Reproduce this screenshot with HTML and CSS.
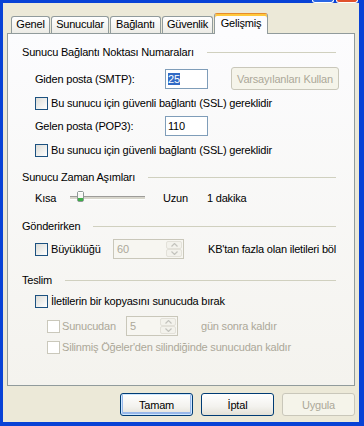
FILE: index.html
```html
<!DOCTYPE html>
<html lang="tr">
<head>
    <meta charset="UTF-8">
    <meta name="viewport" content="width=device-width, initial-scale=1.0">
    <title>Gelişmiş</title>
    <link rel="stylesheet" href="styles.css">
</head>
<body>
    <div class="window">
        <div class="titlebar">
            <span class="tb-btn tb-help"></span>
            <span class="tb-btn tb-close"></span>
        </div>

        <div class="dialog">
            <div class="tabs">
                <div class="tab tab-genel">Genel</div>
                <div class="tab tab-servers">Sunucular</div>
                <div class="tab tab-conn">Bağlantı</div>
                <div class="tab tab-sec">Güvenlik</div>
                <div class="tab tab-active">Gelişmiş</div>
            </div>

            <div class="panel">
                <div class="group-title">
                    <span>Sunucu Bağlantı Noktası Numaraları</span>
                    <span class="rule"></span>
                </div>

                <div class="row row-smtp">
                    <span class="field-label">Giden posta (SMTP):</span>
                    <span class="edit"><span class="sel">25</span></span>
                    <span class="btn btn-disabled btn-defaults">Varsayılanları Kullan</span>
                </div>

                <div class="row check-row c1">
                    <span class="box"></span>
                    <span>Bu sunucu için güvenli bağlantı (SSL) gereklidir</span>
                </div>

                <div class="row row-pop3">
                    <span class="field-label">Gelen posta (POP3):</span>
                    <span class="edit">110</span>
                </div>

                <div class="row check-row c2">
                    <span class="box"></span>
                    <span>Bu sunucu için güvenli bağlantı (SSL) gereklidir</span>
                </div>

                <div class="group-title h2">
                    <span>Sunucu Zaman Aşımları</span>
                    <span class="rule"></span>
                </div>

                <div class="row row-slider">
                    <span class="slider-label">Kısa</span>
                    <span class="track">
                        <svg class="thumb" width="7" height="11" viewBox="0 0 7 11">
                            <rect x="0.5" y="0.5" width="6" height="10" rx="1.5" fill="#f7f7f4" stroke="#8e9896"/>
                            <rect x="1" y="7" width="5" height="3" fill="#3fae48"/>
                            <rect x="1" y="1" width="5" height="1" fill="#ffffff"/>
                        </svg>
                    </span>
                    <span class="slider-long">Uzun</span>
                    <span>1 dakika</span>
                </div>

                <div class="group-title h3">
                    <span>Gönderirken</span>
                    <span class="rule"></span>
                </div>

                <div class="row row-size">
                    <span class="box"></span>
                    <span class="size-label">Büyüklüğü</span>
                    <span class="spin spin-size">
                        <span class="spin-value">60</span>
                        <span class="spin-btns">
                            <span class="spin-btn"><svg width="7" height="4" viewBox="0 0 7 4"><polyline points="0.5,3.5 3.5,0.5 6.5,3.5" fill="none" stroke="#c3c3bd" stroke-width="1.2"/></svg></span>
                            <span class="spin-btn"><svg width="7" height="4" viewBox="0 0 7 4"><polyline points="0.5,0.5 3.5,3.5 6.5,0.5" fill="none" stroke="#c3c3bd" stroke-width="1.2"/></svg></span>
                        </span>
                    </span>
                    <span class="size-tail">KB'tan fazla olan iletileri böl</span>
                </div>

                <div class="group-title h4">
                    <span>Teslim</span>
                    <span class="rule"></span>
                </div>

                <div class="row check-row c3">
                    <span class="box"></span>
                    <span>İletilerin bir kopyasını sunucuda bırak</span>
                </div>

                <div class="row row-days disabled">
                    <span class="box"></span>
                    <span class="days-label">Sunucudan</span>
                    <span class="spin spin-days">
                        <span class="spin-value">5</span>
                        <span class="spin-btns">
                            <span class="spin-btn"><svg width="7" height="4" viewBox="0 0 7 4"><polyline points="0.5,3.5 3.5,0.5 6.5,3.5" fill="none" stroke="#c3c3bd" stroke-width="1.2"/></svg></span>
                            <span class="spin-btn"><svg width="7" height="4" viewBox="0 0 7 4"><polyline points="0.5,0.5 3.5,3.5 6.5,0.5" fill="none" stroke="#c3c3bd" stroke-width="1.2"/></svg></span>
                        </span>
                    </span>
                    <span class="days-tail">gün sonra kaldır</span>
                </div>

                <div class="row check-row c4 disabled">
                    <span class="box"></span>
                    <span>Silinmiş Öğeler'den silindiğinde sunucudan kaldır</span>
                </div>
            </div>

            <div class="actions">
                <span class="btn btn-default">Tamam</span>
                <span class="btn">İptal</span>
                <span class="btn btn-disabled">Uygula</span>
            </div>
        </div>
    </div>
</body>
</html>
```

FILE: styles.css
```css
body {
    margin: 0;
    font-family: "Liberation Sans", Arial, sans-serif;
    font-size: 11px;
    letter-spacing: -0.2px;
    color: #000;
}

.window {
    width: 364px;
    height: 426px;
    box-sizing: border-box;
    background: #0842d6;
    padding: 0 5px 4px 3px;
    display: flex;
    flex-direction: column;
}

.titlebar {
    height: 3px;
    display: flex;
    justify-content: flex-end;
    gap: 2px;
    padding-right: 1px;
}

.tb-btn {
    width: 20px;
    height: 2px;
    border: 1px solid #fff;
    border-top: none;
    border-radius: 0 0 3px 3px;
}

.tb-help {
    background: #2a66e4;
}

.tb-close {
    background: #e0512c;
}

.dialog {
    flex: 1;
    background: #ece9d8;
    display: flex;
    flex-direction: column;
    padding: 10px 4px 0 4px;
}

/* tabs */

.tabs {
    display: flex;
    align-items: flex-end;
    gap: 1px;
    height: 21px;
    padding-left: 4px;
    margin-bottom: -1px;
    position: relative;
    z-index: 1;
}

.tab {
    box-sizing: border-box;
    height: 17px;
    margin-bottom: 1px;
    border: 1px solid #919b9c;
    border-bottom: none;
    border-radius: 3px 3px 0 0;
    background: linear-gradient(#ffffff, #ecebe6);
    text-align: center;
    line-height: 15px;
}

.tab-genel { width: 39px; }
.tab-servers { width: 58px; }
.tab-conn { width: 51px; }
.tab-sec { width: 51px; }

.tab-active {
    width: 54px;
    height: 21px;
    margin-bottom: 0;
    border-top: 1px solid #e68b2c;
    background: #fcfcfe;
    box-shadow: inset 0 2px 0 #ffc83c;
    padding-top: 2px;
}

/* panel */

.panel {
    height: 353px;
    box-sizing: border-box;
    border: 1px solid #919b9c;
    background: linear-gradient(#fcfcfe, #f4f3ee);
    padding: 10px 0 0 14px;
}

.group-title {
    display: flex;
    align-items: center;
    height: 16px;
}

.rule {
    flex: 1;
    border-top: 1px solid #d0d0bf;
    margin: 0 18px 0 13px;
}

.h2 { margin-top: 11px; }
.h3 { margin-top: 10px; }
.h4 { margin-top: 13px; }

.row {
    display: flex;
    align-items: center;
    margin-left: 13px;
}

.check-row { height: 16px; }

.row-smtp { height: 23px; margin-top: 7px; }
.c1 { margin-top: 5px; }
.row-pop3 { height: 20px; margin-top: 5px; }
.c2 { margin-top: 6px; }
.row-slider { height: 20px; margin-top: 3px; }
.row-size { height: 20px; margin-top: 5px; }
.c3 { margin-top: 5px; }
.row-days { height: 20px; margin-top: 7px; margin-left: 25px; }
.c4 { margin-top: 3px; margin-left: 25px; }

.field-label {
    width: 130px;
}

.edit {
    box-sizing: border-box;
    width: 43px;
    height: 20px;
    border: 1px solid #7f9db9;
    background: #fff;
    padding-left: 2px;
    display: flex;
    align-items: center;
}

.sel {
    background: #316ac5;
    color: #fff;
}

.box {
    box-sizing: border-box;
    width: 13px;
    height: 13px;
    border: 1px solid #1c5180;
    background: linear-gradient(135deg, #dcdcd7, #ffffff);
    margin-right: 3px;
    flex-shrink: 0;
}

.disabled {
    color: #aca899;
}

.disabled .box {
    border-color: #cac8bb;
    background: #fff;
    margin-right: 2px;
}

/* slider */

.slider-label {
    width: 35px;
}

.track {
    position: relative;
    width: 75px;
    height: 2px;
    border-top: 1px solid #9d9c99;
    border-bottom: 1px solid #fff;
    background: #d8d6cc;
}

.thumb {
    position: absolute;
    left: 7px;
    top: -6px;
}

.slider-long {
    width: 44px;
    margin-left: 18px;
}

/* spinners */

.size-label { width: 62px; }
.days-label { width: 64px; }

.spin {
    box-sizing: border-box;
    height: 20px;
    border: 1px solid #c9c7ba;
    background: #f7f6f1;
    display: flex;
    color: #aca899;
}

.spin-size { width: 71px; }
.spin-days { width: 52px; }

.spin-value {
    flex: 1;
    padding-left: 3px;
    display: flex;
    align-items: center;
}

.spin-btns {
    width: 16px;
    display: flex;
    flex-direction: column;
    padding: 1px;
    gap: 0;
}

.spin-btn {
    flex: 1;
    border: 1px solid #e3e1d9;
    border-radius: 2px;
    background: #f3f2ec;
    display: flex;
    align-items: center;
    justify-content: center;
}

.size-tail { margin-left: 24px; }
.days-tail { margin-left: 23px; }

/* buttons */

.btn {
    box-sizing: border-box;
    width: 73px;
    height: 23px;
    border: 1px solid #003c74;
    border-radius: 3px;
    background: linear-gradient(#ffffff, #f3f2ee 60%, #e3e1d7);
    display: flex;
    align-items: center;
    justify-content: center;
}

.btn-default {
    box-shadow: inset 0 0 0 1px #cee7ff, inset 0 -1px 0 2px #98b8ea;
}

.btn-disabled {
    border-color: #c9c7ba;
    background: #f5f4ea;
    color: #aca899;
}

.btn-defaults {
    width: 108px;
    margin-left: 23px;
}

.actions {
    display: flex;
    justify-content: flex-end;
    gap: 8px;
    margin-top: 7px;
}
```
